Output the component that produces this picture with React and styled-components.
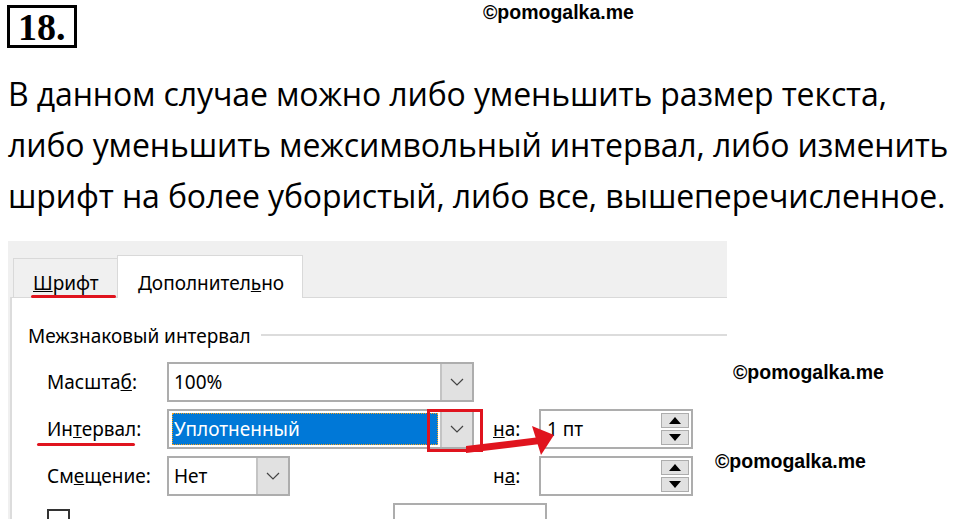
import React from 'react';
import styled, { createGlobalStyle } from 'styled-components';

const GlobalStyle = createGlobalStyle`
    body {
        margin: 0;
        background: #ffffff;
    }
`

const Page = styled.div`
    position: relative;
    width: 960px;
    height: 524px;
    overflow: hidden;
    background: #ffffff;
    color: #000000;
`

const Header = styled.div`
    display: flex;
    align-items: flex-start;
    padding: 5px 0 0 7px;
    height: 43px;
    box-sizing: border-box;
`

const NumberBox = styled.div`
    width: 70px;
    height: 43px;
    box-sizing: border-box;
    border: 3px solid #000;
    font-family: "Liberation Serif", serif;
    font-weight: 700;
    font-size: 38px;
    line-height: 38px;
    padding-left: 8px;
`

const Stamp = styled.div`
    font-family: "Liberation Sans", Arial, sans-serif;
    font-weight: 700;
    font-size: 19.5px;
    line-height: 20px;
    white-space: nowrap;
    ${props => props.$over && `
        position: absolute;
        left: ${props.$x}px;
        top: ${props.$y}px;
    `}
    ${props => !props.$over && `margin: -3px 0 0 ${props.$x}px;`}
`

const Paragraph = styled.div`
    margin: 25px 0 0 8px;
    font-family: "Open Sans", sans-serif;
    font-size: 32px;
    line-height: 51px;
    letter-spacing: -0.12px;
    height: 153px;
`

const Line = styled.div`
    white-space: nowrap;
`

const Dialog = styled.div`
    margin: 20px 0 0 8px;
    width: 719px;
    height: 278px;
    background: #f0f0f0;
    font-family: "Noto Sans", sans-serif;
    font-size: 19px;
    display: flex;
    flex-direction: column;
    overflow: hidden;
`

const TabStrip = styled.div`
    display: flex;
    align-items: flex-end;
    height: 56px;
    padding-left: 5px;
    flex-shrink: 0;
`

const Tab = styled.div`
    box-sizing: border-box;
    height: ${props => props.$active ? '43px' : '39px'};
    padding: ${props => props.$active ? '15px 20px 0 20px' : '12px 0 0 19px'};
    width: ${props => props.$active ? '186px' : '104px'};
    background: ${props => props.$active ? '#ffffff' : 'transparent'};
    border: 1px solid #d9d9d9;
    border-bottom: none;
    border-right: ${props => props.$active ? '1px solid #d9d9d9' : 'none'};
    margin-bottom: ${props => props.$active ? '-1px' : '0'};
    position: relative;
    z-index: 1;
    line-height: 24px;
    white-space: nowrap;
`

const Panel = styled.div`
    flex: 1;
    margin-left: 2px;
    background: #ffffff;
    border-top: 1px solid #d9d9d9;
    border-left: 2px solid #dcdcdc;
    padding: 27px 0 0 16px;
`

const GroupTitle = styled.div`
    display: flex;
    align-items: center;
    height: 22px;
    line-height: 22px;
    &::after {
        content: '';
        flex: 1;
        height: 2px;
        background: #dcdcdc;
        margin-left: 10px;
        margin-top: -2px;
    }
`

const Rows = styled.div`
    display: grid;
    grid-template-columns: 120px 307px 65px 154px;
    grid-auto-rows: 40px;
    row-gap: 7px;
    margin: 15px 0 0 19px;
    align-items: center;
`

const Label = styled.div`
    padding-left: ${props => props.$pad || 0}px;
    white-space: nowrap;
    line-height: 24px;
`

const Combo = styled.div`
    display: flex;
    box-sizing: border-box;
    height: 40px;
    width: ${props => props.$w || 307}px;
    border: 2px solid #adadad;
    background: #ffffff;
    padding: 2px 0 2px 3px;
`

const ComboValue = styled.div`
    flex: 1;
    display: flex;
    align-items: center;
    padding-left: 2px;
    white-space: nowrap;
    ${props => props.$selected && `
        background: #0078d7;
        color: #ffffff;
        outline: 1px dotted #f7a21b;
        outline-offset: -1px;
        margin-right: 2px;
    `}
`

const DropButton = styled.div`
    width: 30px;
    margin: -2px 0;
    background: #e1e1e1;
    border-left: 2px solid #c4c4c4;
    display: flex;
    align-items: center;
    justify-content: center;
`

const Spin = styled.div`
    display: flex;
    box-sizing: border-box;
    height: 40px;
    width: ${props => props.$w || 154}px;
    border: 2px solid #adadad;
    background: #ffffff;
`

const SpinValue = styled.div`
    flex: 1;
    display: flex;
    align-items: center;
    padding-left: 6px;
    white-space: nowrap;
`

const SpinButtons = styled.div`
    display: flex;
    flex-direction: column;
    gap: 2px;
    padding: 2px 2px 2px 0;
    width: 28px;
`

const SpinButton = styled.div`
    flex: 1;
    background: #e1e1e1;
    border: 1px solid #adadad;
    display: flex;
    align-items: center;
    justify-content: center;
`

const BottomRow = styled.div`
    display: flex;
    align-items: flex-start;
    margin: 7px 0 0 19px;
`

const CheckBox = styled.div`
    width: 23px;
    height: 23px;
    box-sizing: border-box;
    border: 2px solid #333;
    margin-top: 6px;
`

const PartSpin = styled(Spin)`
    margin-left: 323px;
    height: 30px;
    border-bottom: none;
`

const RedLine = styled.div`
    position: absolute;
    left: ${props => props.$x}px;
    top: ${props => props.$y}px;
    width: ${props => props.$w}px;
    height: 3px;
    background: #e0141e;
    border-radius: 2px;
`

const RedFrame = styled.div`
    position: absolute;
    left: 427px;
    top: 409px;
    width: 56px;
    height: 43px;
    box-sizing: border-box;
    border: 3px solid #e0141e;
`

const ArrowSvg = styled.svg`
    position: absolute;
    left: 460px;
    top: 418px;
`

const Chevron = () => (
    <svg width="14" height="8" viewBox="0 0 14 8">
        <path d="M1 1 L7 7 L13 1" fill="none" stroke="#444" strokeWidth="1.2" />
    </svg>
)

const Triangle = ({up}) => (
    <svg width="12" height="7" viewBox="0 0 12 7">
        <path d={up ? 'M0 7 L6 0 L12 7 Z' : 'M0 0 L6 7 L12 0 Z'} fill="#000" />
    </svg>
)

const SpinBox = ({value, w}) => (
    <Spin $w={w}>
        <SpinValue>{value}</SpinValue>
        <SpinButtons>
            <SpinButton><Triangle up /></SpinButton>
            <SpinButton><Triangle /></SpinButton>
        </SpinButtons>
    </Spin>
)

const ComboBox = ({value, w, selected}) => (
    <Combo $w={w}>
        <ComboValue $selected={selected}>{value}</ComboValue>
        <DropButton><Chevron /></DropButton>
    </Combo>
)

const App = () => {
    return (
        <Page>
            <GlobalStyle />
            <Header>
                <NumberBox>18.</NumberBox>
                <Stamp $x={406}>©pomogalka.me</Stamp>
            </Header>
            <Paragraph>
                <Line>В данном случае можно либо уменьшить размер текста,</Line>
                <Line>либо уменьшить межсимвольный интервал, либо изменить</Line>
                <Line>шрифт на более убористый, либо все, вышеперечисленное.</Line>
            </Paragraph>
            <Dialog>
                <TabStrip>
                    <Tab><u>Ш</u>рифт</Tab>
                    <Tab $active>Дополнител<u>ь</u>но</Tab>
                </TabStrip>
                <Panel>
                    <GroupTitle>Межзнаковый интервал</GroupTitle>
                    <Rows>
                        <Label>Масшта<u>б</u>:</Label>
                        <ComboBox value="100%" />
                        <div />
                        <div />

                        <Label>Ин<u>т</u>ервал:</Label>
                        <ComboBox value="Уплотненный" selected />
                        <Label $pad={19}><u>н</u>а:</Label>
                        <SpinBox value="1 пт" />

                        <Label>См<u>е</u>щение:</Label>
                        <ComboBox value="Нет" w={123} />
                        <Label $pad={19}>н<u>а</u>:</Label>
                        <SpinBox value="" />
                    </Rows>
                    <BottomRow>
                        <CheckBox />
                        <PartSpin $w={154} />
                    </BottomRow>
                </Panel>
            </Dialog>

            <Stamp $over $x={733} $y={362}>©pomogalka.me</Stamp>
            <Stamp $over $x={715} $y={451}>©pomogalka.me</Stamp>
            <RedLine $x={31} $y={295} $w={85} />
            <RedLine $x={37} $y={443} $w={98} />
            <RedFrame />
            <ArrowSvg width="100" height="45" viewBox="0 0 100 45">
                <path d="M6 28 L6 35 L80 26 L80 19 Z" fill="#e0141e" />
                <path d="M72 8 L94 17 L81 37 Z" fill="#e0141e" />
            </ArrowSvg>
        </Page>
    );
}

export default App
